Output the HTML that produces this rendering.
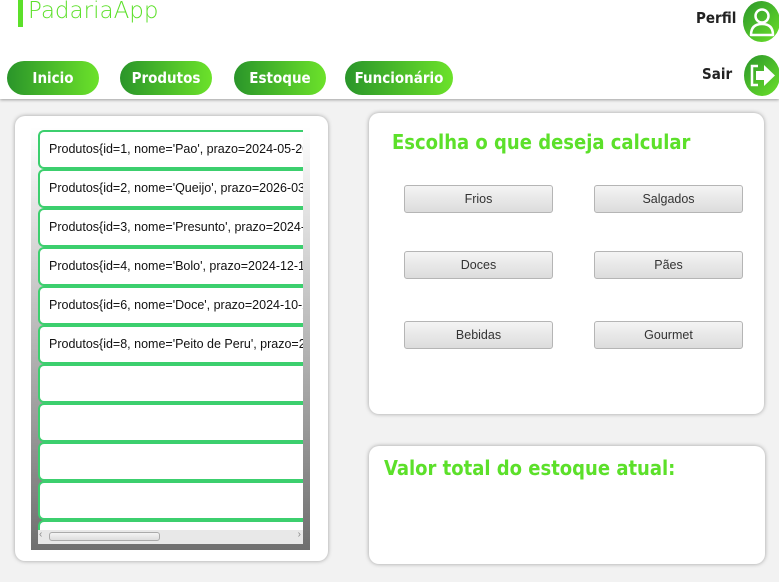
<!DOCTYPE html>
<html><head><meta charset="utf-8"><style>
*{margin:0;padding:0;box-sizing:border-box}
body{width:779px;height:582px;background:#f2f2f2;font-family:"Liberation Sans",sans-serif;position:relative;overflow:hidden}
.hdr{position:absolute;left:0;top:0;width:779px;height:99px;background:#fff;box-shadow:0 1px 3px rgba(0,0,0,.35)}
.bar{position:absolute;left:18px;top:0;width:5px;height:27px;background:#5ce02a}
.title{position:absolute;left:28px;top:-2px;font-size:23px;color:#5ce02a;font-family:"DejaVu Sans","Liberation Sans",sans-serif;font-weight:300}
.pill{position:absolute;top:61px;height:34px;border-radius:17px;background:linear-gradient(90deg,#2a952a,#6ce22a);color:#fff;font-weight:bold;font-size:15px;display:flex;align-items:center;justify-content:center;font-family:"DejaVu Sans Condensed","Liberation Sans Narrow","Liberation Sans",sans-serif}
.lbl{position:absolute;font-weight:bold;font-size:15px;color:#222;font-family:"DejaVu Sans Condensed","Liberation Sans",sans-serif}
.circ{position:absolute;border-radius:50%;background:linear-gradient(135deg,#2a952a,#6ce22a)}
.panel{position:absolute;background:#fff;border-radius:10px;box-shadow:0 0 4px rgba(0,0,0,.35)}
.list{position:absolute;left:31px;top:127px;width:279px;height:423px;background:linear-gradient(#fff,#6f6f6f)}
.cell{position:absolute;left:7px;width:265px;height:39px;background:#fff;border:2px solid #3ccf6e;border-right:none;border-radius:6px 0 0 6px;font-size:12.5px;color:#111;padding:10px 0 0 9px;white-space:nowrap;overflow:hidden;font-family:"Liberation Sans",sans-serif}
.btn{position:absolute;width:149px;height:28px;border:1px solid #b5b5b5;border-radius:3px;background:linear-gradient(#f4f4f4,#dcdcdc);font-size:12.5px;color:#333;display:flex;align-items:center;justify-content:center}
.h2{position:absolute;color:#5ce02a;font-weight:bold;font-size:20px;font-family:"DejaVu Sans Condensed","Liberation Sans",sans-serif}
</style></head><body>
<div class="hdr">
<div class="bar"></div><div class="title">PadariaApp</div>
<div class="pill" style="left:7px;width:92px">Inicio</div>
<div class="pill" style="left:120px;width:92px">Produtos</div>
<div class="pill" style="left:234px;width:92px">Estoque</div>
<div class="pill" style="left:345px;width:108px">Funcionário</div>
<div class="lbl" style="left:696px;top:9px">Perfil</div>
<div class="circ" style="left:743px;top:1px;width:37px;height:41px"><svg width="37" height="41" viewBox="0 0 37 41"><circle cx="19" cy="15" r="6.5" fill="none" stroke="#fff" stroke-width="2.5"/><path d="M8 34 Q8 23 19 23 Q30 23 30 34 Z" fill="none" stroke="#fff" stroke-width="2.5" stroke-linejoin="round"/></svg></div>
<div class="lbl" style="left:702px;top:65px">Sair</div>
<div class="circ" style="left:744px;top:55px;width:36px;height:41px"><svg width="36" height="41" viewBox="0 0 36 41"><path d="M14 11 H8 V30 H14" fill="none" stroke="#fff" stroke-width="2.5"/><path d="M12 16 H20 V10 L31 20.5 L20 31 V25 H12 Z" fill="#fff"/></svg></div>
</div>
<div class="panel" style="left:15px;top:116px;width:313px;height:445px">
<div class="list" style="left:16px;top:11px">
<div class="cell" style="top:3px">Produtos{id=1, nome='Pao', prazo=2024-05-20,</div>
<div class="cell" style="top:42px">Produtos{id=2, nome='Queijo', prazo=2026-03-</div>
<div class="cell" style="top:81px">Produtos{id=3, nome='Presunto', prazo=2024-1</div>
<div class="cell" style="top:120px">Produtos{id=4, nome='Bolo', prazo=2024-12-10</div>
<div class="cell" style="top:159px">Produtos{id=6, nome='Doce', prazo=2024-10-28</div>
<div class="cell" style="top:198px">Produtos{id=8, nome='Peito de Peru', prazo=20</div>
<div class="cell" style="top:237px"></div>
<div class="cell" style="top:276px"></div>
<div class="cell" style="top:315px"></div>
<div class="cell" style="top:354px"></div>
<div class="cell" style="top:393px;height:20px"></div>
<div style="position:absolute;left:7px;top:403px;width:265px;height:14px;background:#e8e8e8;font-size:10px;color:#888">
<div style="position:absolute;left:11px;top:2px;width:111px;height:9px;border:1px solid #aaa;border-radius:3px;background:linear-gradient(#f4f4f4,#ddd)"></div>
<span style="position:absolute;left:1px;top:-1px">‹</span><span style="position:absolute;right:2px;top:-1px">›</span></div>
</div>
</div>
<div class="panel" style="left:369px;top:113px;width:395px;height:301px">
<div class="h2" style="left:23px;top:17px">Escolha o que deseja calcular</div>
<div class="btn" style="left:35px;top:72px">Frios</div>
<div class="btn" style="left:225px;top:72px">Salgados</div>
<div class="btn" style="left:35px;top:138px">Doces</div>
<div class="btn" style="left:225px;top:138px">Pães</div>
<div class="btn" style="left:35px;top:208px">Bebidas</div>
<div class="btn" style="left:225px;top:208px">Gourmet</div>
</div>
<div class="panel" style="left:369px;top:446px;width:396px;height:118px">
<div class="h2" style="left:15px;top:10px">Valor total do estoque atual:</div>
</div>
</body></html>
